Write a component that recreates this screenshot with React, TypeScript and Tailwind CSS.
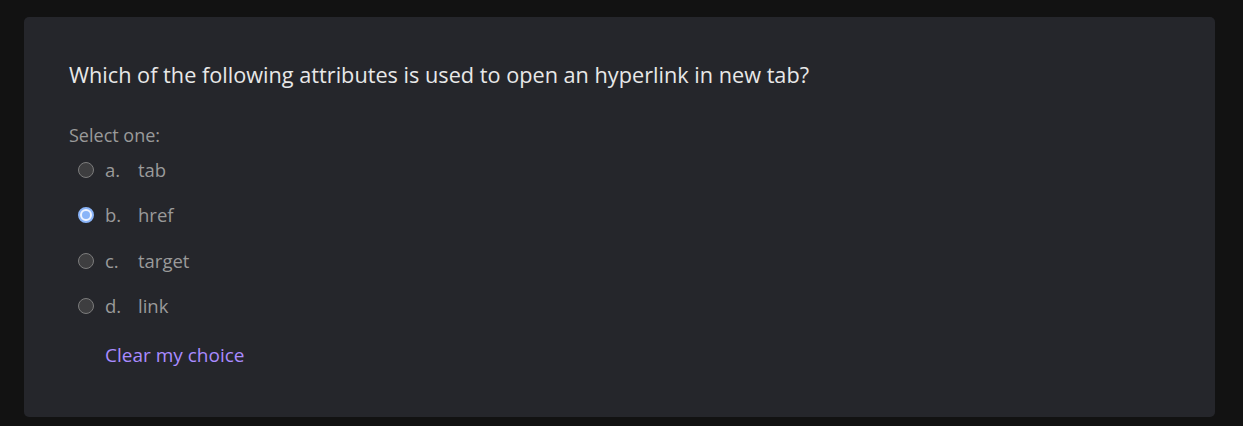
import React from "react";

const options = [
  { l: "a.", t: "tab", checked: false },
  { l: "b.", t: "href", checked: true },
  { l: "c.", t: "target", checked: false },
  { l: "d.", t: "link", checked: false },
];

function Radio({ checked }: { checked: boolean }) {
  if (checked) {
    return (
      <span className="flex h-[16px] w-[16px] shrink-0 items-center justify-center rounded-full border-2 border-[#8ab4f8] bg-[#eef3ff]">
        <span className="h-[8px] w-[8px] rounded-full bg-[#8ab4f8]" />
      </span>
    );
  }
  return <span className="h-[16px] w-[16px] shrink-0 rounded-full border-[1.5px] border-[#7c7c7c] bg-[#3e3e40]" />;
}

export default function App() {
  return (
    <div className="min-h-[426px] w-full bg-[#121212] pl-[24px] pr-[28px] pt-[17px] pb-[9px]">
      <div className="h-[400px] rounded-[5px] bg-[#25262b] px-[45px] pt-[44px]">
        <p className="font-['Open_Sans',sans-serif] text-[21.7px] leading-[28px] text-[#e8e8e8]">
          Which of the following attributes is used to open an hyperlink in new tab?
        </p>
        <p className="mt-[34px] font-['Open_Sans',sans-serif] text-[18px] leading-[24px] text-[#9a9a9a]">
          Select one:
        </p>
        <div className="flex flex-col">
          {options.map((o) => (
            <div key={o.l} className="flex h-[45.5px] items-center pl-[9px]">
              <Radio checked={o.checked} />
              <span className="ml-[11px] w-[33px] font-['Open_Sans',sans-serif] text-[18.5px] text-[#9a9a9a]">{o.l}</span>
              <span className="font-['Open_Sans',sans-serif] text-[18.5px] text-[#9a9a9a]">{o.t}</span>
            </div>
          ))}
        </div>
        <p className="ml-[36px] mt-[12px] font-['Open_Sans',sans-serif] text-[19px] leading-[28px] text-[#a98bff]">
          Clear my choice
        </p>
      </div>
    </div>
  );
}
